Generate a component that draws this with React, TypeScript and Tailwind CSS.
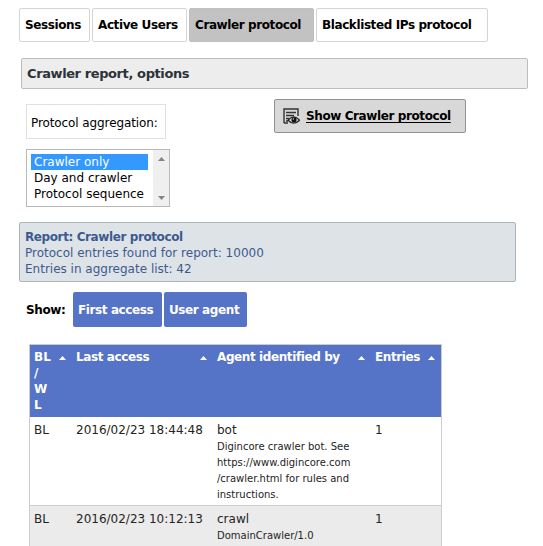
import React from "react";

const tabs = [
  { label: "Sessions", box: "w-[71px] tracking-[-0.4px]", active: false },
  { label: "Active Users", box: "w-[95px] tracking-[-0.4px]", active: false },
  { label: "Crawler protocol", box: "w-[125px] tracking-[-0.4px]", active: true },
  { label: "Blacklisted IPs protocol", box: "w-[172px] tracking-[-0.4px]", active: false },
];

function SortArrow() {
  return (
    <svg width="7" height="4" viewBox="0 0 7 4" className="mt-[7px] shrink-0" fill="#fff">
      <path d="M3.5 0 7 4H0Z" />
    </svg>
  );
}

function ReportIcon() {
  return (
    <svg width="17" height="17" viewBox="0 0 17 17" fill="none">
      <path d="M1 15V1h14v7" stroke="#333" strokeWidth="1.4" />
      <path d="M3 4.5h10M3 7.5h8M3 10.5h3M3 13h2M1 15h4" stroke="#333" strokeWidth="1.5" />
      <path d="M5 12.2Q10.8 5.5 16.5 12.2 10.8 18 5 12.2Z" fill="#ddd" stroke="#222" strokeWidth="1.3" />
      <circle cx="11" cy="11.8" r="2.6" fill="#111" />
      <circle cx="10.3" cy="11" r=".7" fill="#ddd" />
    </svg>
  );
}

const cols = "grid grid-cols-[42px_141px_158px_1fr] pl-[4px]";

export default function App() {
  return (
    <div className="h-[546px] w-[543px] overflow-hidden whitespace-nowrap bg-white font-['DejaVu_Sans',sans-serif] text-[12px] leading-4 text-black">
      <nav className="flex gap-[2px] pl-[19px] pt-[8px] font-bold">
        {tabs.map((t) => (
          <a
            key={t.label}
            className={`flex h-[34px] items-center rounded-[2px] border pl-[5px] ${t.box} ${
              t.active ? "border-[#c0c0c0] bg-[#c2c2c2]" : "border-[#d5d5d5] bg-white"
            }`}
          >
            <span>{t.label}</span>
          </a>
        ))}
      </nav>

      <h2 className="ml-[21px] mt-[16px] flex h-[31px] w-[507px] items-center rounded-[2px] border border-[#bdbdbd] bg-[#ededed] pl-[5px] text-[13px] font-bold text-[#2b3238]">
        <span className="tracking-[-0.4px]">Crawler report, options</span>
      </h2>

      <div className="flex pl-[26px] pt-[10px]">
        <div className="w-[248px] pt-[5px]">
          <div className="flex h-[35px] w-[140px] items-center border border-[#e0e0e0] pl-[4px] pt-[2px]">
            <span className="tracking-[-0.1px]">Protocol aggregation:</span>
          </div>
          <div className="mt-[10px] flex h-[58px] w-[144px] border border-[#b8b8b8]">
            <div className="flex-1 pl-[4px] pt-[4px]">
              <div className="w-[117px] bg-[#3399ff] pl-[3px] text-white"><span>Crawler only</span></div>
              <div className="pl-[3px]"><span>Day and crawler</span></div>
              <div className="pl-[3px]"><span>Protocol sequence</span></div>
            </div>
            <div className="flex w-[16px] flex-col items-center justify-between bg-[#efefef] pb-[6px] pt-[7px]">
              <svg width="7" height="4" viewBox="0 0 7 4" fill="#858585"><path d="M3.5 0 7 4H0Z" /></svg>
              <svg width="7" height="4" viewBox="0 0 7 4" fill="#858585"><path d="M3.5 4 7 0H0Z" /></svg>
            </div>
          </div>
        </div>
        <button className="flex h-[34px] w-[192px] items-center rounded-[2px] border border-[#929292] bg-[#d8d8d8] pl-[8px] font-bold">
          <ReportIcon />
          <span className="ml-[6px] tracking-[-0.4px] underline underline-offset-2">Show Crawler protocol</span>
        </button>
      </div>

      <section className="ml-[19px] mt-[15px] h-[60px] w-[497px] rounded-[2px] border border-[#aeb5b9] bg-[#dee3e7] pl-[5px] pt-[6px] text-[#3d5a8f]">
        <div className="font-bold"><span className="tracking-[-0.4px]">Report: Crawler protocol</span></div>
        <div><span>Protocol entries found for report: 10000</span></div>
        <div><span>Entries in aggregate list: 42</span></div>
      </section>

      <div className="mt-[10px] flex h-[35px] items-center pl-[26px] font-bold">
        <span className="w-[47px] tracking-[-0.4px]">Show:</span>
        <button className="flex h-full w-[89px] items-center rounded-[2px] bg-[#5573c7] pl-[5px] text-white">
          <span className="tracking-[-0.4px]">First access</span>
        </button>
        <button className="ml-[2px] flex h-full w-[83px] items-center rounded-[2px] bg-[#5573c7] pl-[5px] text-white">
          <span className="tracking-[-0.4px]">User agent</span>
        </button>
      </div>

      <div className="ml-[29px] mt-[17px] w-[413px] border border-[#ccc] text-[#242424]">
        <div className={`${cols} h-[72px] bg-[#5573c7] pt-[4px] font-bold text-white`}>
          <div className="flex"><span className="w-[25px]">BL<br />/<br />W<br />L</span><SortArrow /></div>
          <div className="flex"><span className="w-[124px] tracking-[-0.4px]">Last access</span><SortArrow /></div>
          <div className="flex"><span className="w-[141px] tracking-[-0.4px]">Agent identified by</span><SortArrow /></div>
          <div className="flex"><span className="w-[53px] tracking-[-0.4px]">Entries</span><SortArrow /></div>
        </div>
        <div className={`${cols} h-[88px] pt-[5px]`}>
          <span>BL</span>
          <span>2016/02/23 18:44:48</span>
          <div>
            <div>bot</div>
            <div className="pt-px text-[10px] leading-4">
              <span>Digincore crawler bot. See</span><br />
              <span>https://www.digincore.com</span><br />
              <span>/crawler.html for rules and</span><br />
              <span>instructions.</span>
            </div>
          </div>
          <span>1</span>
        </div>
        <div className={`${cols} h-[88px] border-t border-[#ccc] bg-[#ebebeb] pt-[5px]`}>
          <span>BL</span>
          <span>2016/02/23 10:12:13</span>
          <div>
            <div>crawl</div>
            <div className="pt-px text-[10px] leading-4"><span>DomainCrawler/1.0</span></div>
          </div>
          <span>1</span>
        </div>
      </div>
    </div>
  );
}
